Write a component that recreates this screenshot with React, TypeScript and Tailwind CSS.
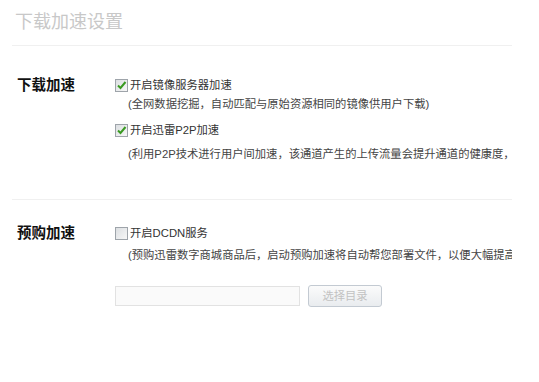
import React from 'react';

const font = { fontFamily: '"Liberation Sans", "Noto Sans CJK SC", sans-serif' };

function CheckBox({ checked }: { checked: boolean }) {
  return (
    <span className="w-[13px] h-[13px] border border-[#9ea4aa] bg-gradient-to-br from-[#dcdfe2] to-[#f7f7f7] flex items-center justify-center shrink-0">
      {checked && (
        <svg width="11" height="11" viewBox="0 0 11 11">
          <path d="M2 5.5 L4.5 8 L9.5 2" fill="none" stroke="#3a9a22" strokeWidth="2" />
        </svg>
      )}
    </span>
  );
}

function Option({ checked, label }: { checked: boolean; label: string }) {
  return (
    <div className="flex items-center gap-[2px] h-[16px] text-[11.3px] text-[#333]">
      <CheckBox checked={checked} />
      <span>{label}</span>
    </div>
  );
}

function Desc({ children }: { children: React.ReactNode }) {
  return <div className="h-[16px] leading-[16px] text-[11.3px] text-[#444] pl-[13px]">{children}</div>;
}

export default function App() {
  return (
    <div className="w-[539px] h-[382px] bg-white overflow-hidden" style={font}>
      <div className="w-[500px] ml-[12px] overflow-hidden whitespace-nowrap">
        <div className="h-[46px] pt-[12px] pl-[3px] border-b border-[#f0f0f0] text-[18px] leading-[20px] text-[#c8c8c8]">
          下载加速设置
        </div>

        {/* 下载加速 */}
        <div className="flex pt-[31px] h-[154px] border-b border-[#f0f0f0]">
          <div className="w-[103px] shrink-0 pl-[5px] text-[14.5px] font-bold leading-[16px] text-[#111]">下载加速</div>
          <div className="flex flex-col">
            <Option checked label="开启镜像服务器加速" />
            <div className="mt-[3px]">
              <Desc>(全网数据挖掘，自动匹配与原始资源相同的镜像供用户下载)</Desc>
            </div>
            <div className="mt-[10px]">
              <Option checked label="开启迅雷P2P加速" />
            </div>
            <div className="mt-[8px]">
              <Desc>(利用P2P技术进行用户间加速，该通道产生的上传流量会提升通道的健康度，</Desc>
            </div>
          </div>
        </div>

        {/* 预购加速 */}
        <div className="flex pt-[25px]">
          <div className="w-[103px] shrink-0 pl-[5px] text-[14.5px] font-bold leading-[16px] text-[#111]">预购加速</div>
          <div className="flex flex-col">
            <Option checked={false} label="开启DCDN服务" />
            <div className="mt-[6px]">
              <Desc>(预购迅雷数字商城商品后，启动预购加速将自动帮您部署文件，以便大幅提高下载速度)</Desc>
            </div>
            <div className="flex items-center gap-[8px] mt-[22px]">
              <div className="w-[185px] h-[20px] border border-[#e2e2e2] bg-[#fafafa]" />
              <button className="w-[74px] h-[22px] rounded-[3px] border border-[#c3cad2] bg-gradient-to-b from-[#fbfbfb] to-[#e9ecef] text-[11.3px] text-[#c2c2c2]">
                选择目录
              </button>
            </div>
          </div>
        </div>
      </div>
    </div>
  );
}
